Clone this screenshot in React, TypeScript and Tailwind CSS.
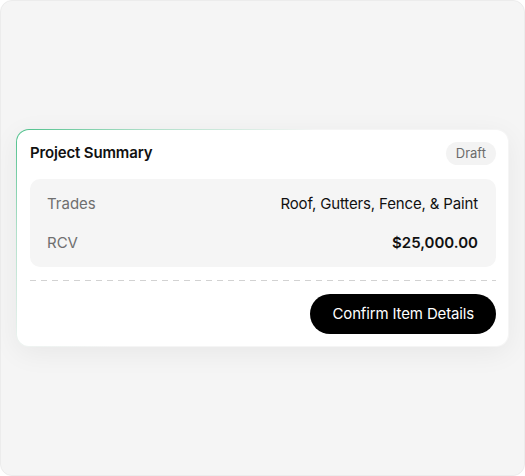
export default function App() {
  return (
    <div
      className="flex h-[476px] w-[525px] items-center rounded-xl border border-[#ececec] bg-[#f5f5f5] px-[15px]"
      style={{ fontFamily: "Inter, 'Noto Sans', sans-serif" }}
    >
      {/* Card with gradient border at the top-left */}
      <div className="w-full rounded-[13px] bg-[radial-gradient(ellipse_300px_230px_at_top_left,#4cc08a_0%,rgba(76,192,138,0.4)_45%,transparent_100%)] p-px shadow-[0_6px_28px_rgba(0,0,0,0.06)]">
        <div className="rounded-[12px] bg-white pl-[13px] pr-[12px] pt-[12px] pb-[12px]">
          <div className="flex items-center justify-between">
            <h2 className="text-[15px] font-semibold tracking-[-0.01em] text-[#111]">Project Summary</h2>
            <span className="rounded-full bg-[#f3f3f3] px-[10px] py-[2px] text-[13px] leading-[19px] text-[#6b6b6b]">
              Draft
            </span>
          </div>

          <div className="mt-[14px] flex flex-col gap-[19px] rounded-[10px] bg-[#f5f5f5] pl-[17px] pr-[18px] pt-[15px] pb-[14px] text-[15px] leading-[20px]">
            <div className="flex items-center justify-between">
              <span className="text-[#6f6f6f]">Trades</span>
              <span className="tracking-[-0.01em] text-[#111]">Roof, Gutters, Fence, &amp; Paint</span>
            </div>
            <div className="flex items-center justify-between">
              <span className="text-[#6f6f6f]">RCV</span>
              <span className="font-semibold text-[#111]">$25,000.00</span>
            </div>
          </div>

          <div className="mt-[13px] h-px bg-[repeating-linear-gradient(to_right,#d2d2d2_0_6px,transparent_6px_11px)]" />

          <div className="mt-[13px] flex justify-end">
            <button className="h-[40px] rounded-full bg-black px-[22px] text-[15px] tracking-[-0.01em] text-white">
              Confirm Item Details
            </button>
          </div>
        </div>
      </div>
    </div>
  );
}
